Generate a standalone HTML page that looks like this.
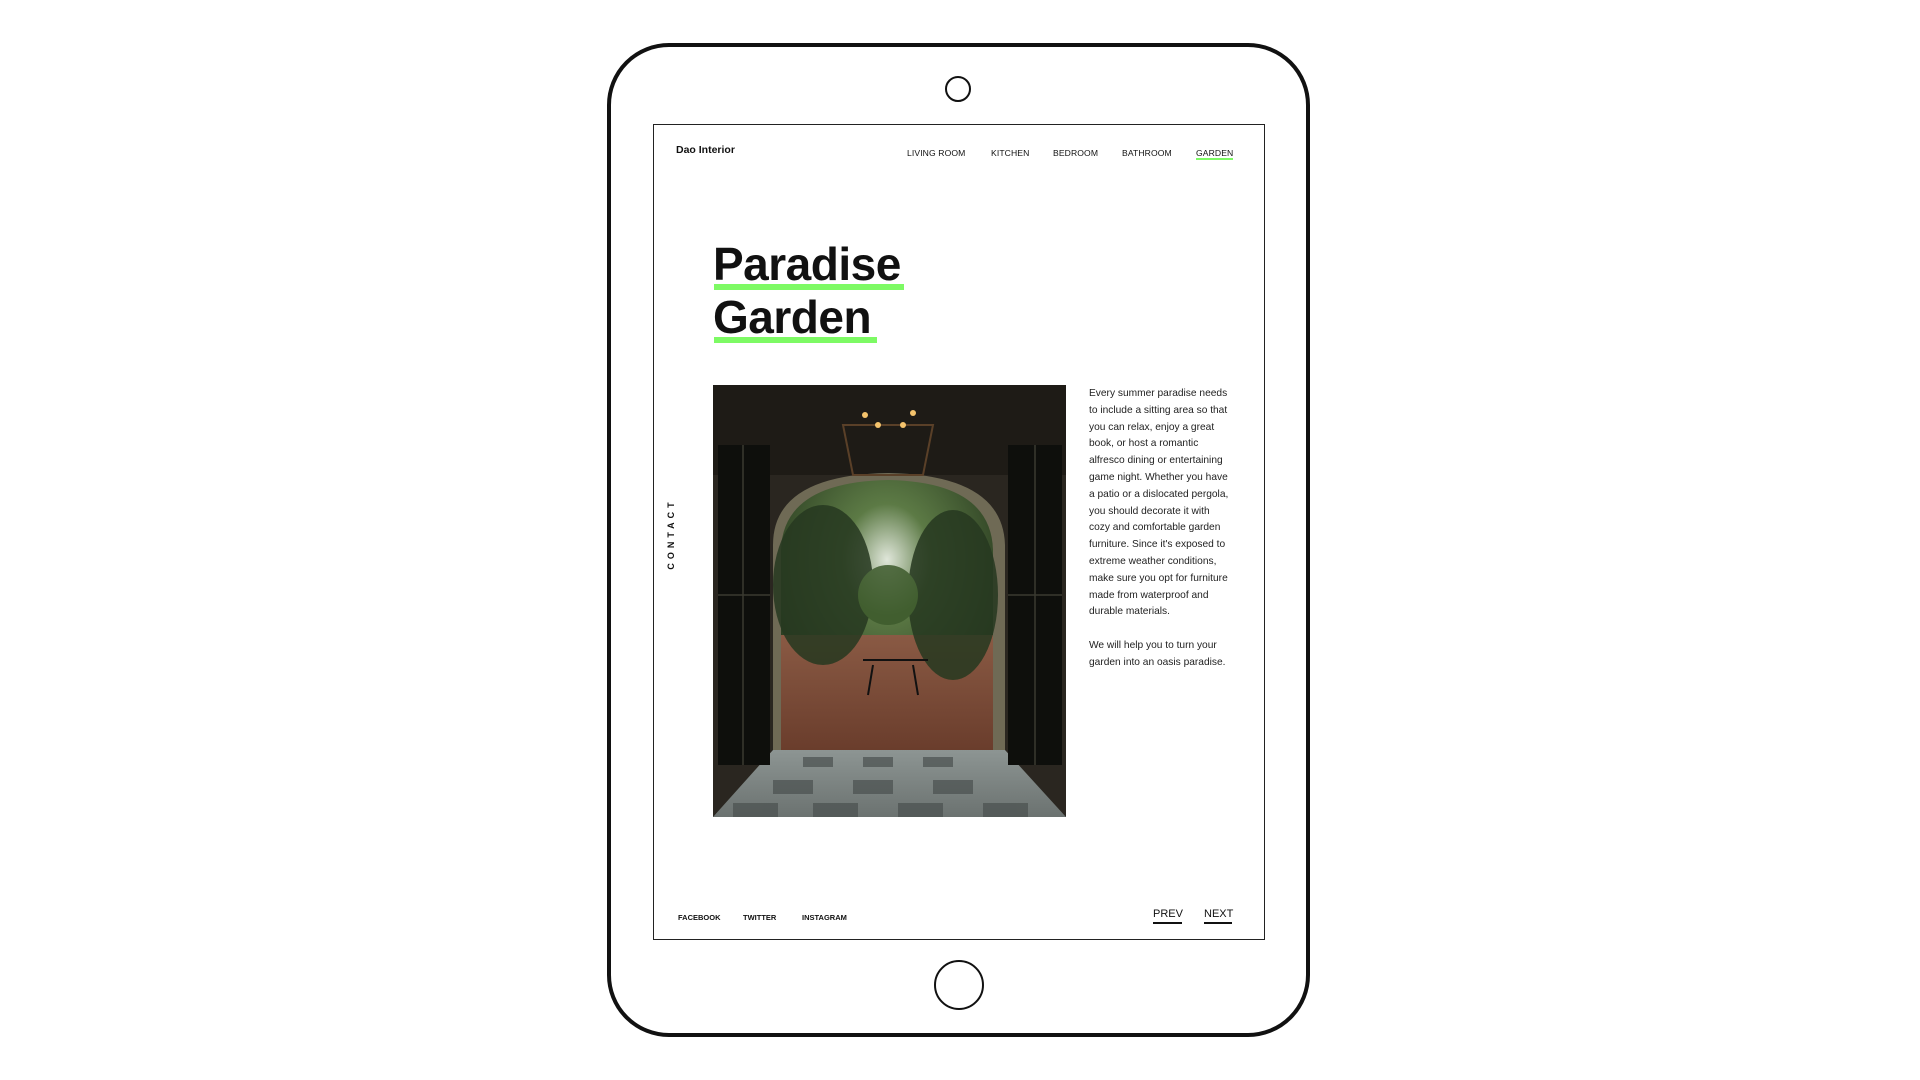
<!DOCTYPE html>
<html><head><meta charset="utf-8"><style>
*{margin:0;padding:0;box-sizing:border-box}
body{width:1920px;height:1080px;background:#fff;position:relative;overflow:hidden;font-family:"Liberation Sans",sans-serif;color:#111}
.abs{position:absolute}
.pad{left:607px;top:43px;width:703px;height:994px;border:4px solid #111;border-radius:62px}
.cam{left:945px;top:76px;width:26px;height:26px;border:2px solid #111;border-radius:50%}
.home{left:934px;top:960px;width:50px;height:50px;border:2px solid #111;border-radius:50%}
.screen{left:653px;top:124px;width:612px;height:816px;border:1.5px solid #222}
.nav{font-size:8.6px;top:148px;letter-spacing:.1px}
.title{left:713px;font-size:46px;font-weight:bold;letter-spacing:-.5px;line-height:1}
.ul{background:#7dfa64;height:6px;left:714px}
.txt{left:1089px;top:386px;width:142px;font-size:10.2px;line-height:16.8px;color:#222}
.foot{font-size:7.5px;font-weight:bold;top:913px}
.pn{font-size:11px;top:908px}
</style></head><body>
<div class="abs pad"></div>
<div class="abs cam"></div>
<div class="abs home"></div>
<div class="abs screen"></div>
<div class="abs" style="left:676px;top:144px;font-size:10.5px;font-weight:bold">Dao Interior</div>
<div class="abs nav" style="left:907px">LIVING ROOM</div>
<div class="abs nav" style="left:991px">KITCHEN</div>
<div class="abs nav" style="left:1053px">BEDROOM</div>
<div class="abs nav" style="left:1122px">BATHROOM</div>
<div class="abs nav" style="left:1196px">GARDEN</div>
<div class="abs" style="left:1196px;top:158px;width:37px;height:2px;background:#7dfa64"></div>
<div class="abs title" style="top:241px">Paradise</div>
<div class="abs ul" style="top:284px;width:190px"></div>
<div class="abs title" style="top:294px">Garden</div>
<div class="abs ul" style="top:337px;width:163px"></div>
<svg class="abs" style="left:713px;top:385px" width="353" height="432" viewBox="0 0 353 432">
<defs>
<linearGradient id="fl" x1="0" y1="0" x2="0" y2="1"><stop offset="0" stop-color="#8a5a44"/><stop offset="1" stop-color="#6a3d2c"/></linearGradient>
<linearGradient id="tl" x1="0" y1="0" x2="0" y2="1"><stop offset="0" stop-color="#8d9593"/><stop offset="1" stop-color="#6b7270"/></linearGradient>
<radialGradient id="gr" cx=".5" cy=".3" r=".7"><stop offset="0" stop-color="#dfe6d9"/><stop offset=".3" stop-color="#5c7a45"/><stop offset="1" stop-color="#1d2c17"/></radialGradient>
</defs>
<rect width="353" height="432" fill="#2a2620"/>
<rect x="0" y="0" width="353" height="90" fill="#1e1b16"/>
<path d="M60 420 V160 Q60 90 175 88 Q290 90 292 160 V420 Z" fill="#6f6a55"/>
<path d="M68 360 V165 Q70 97 175 95 Q278 97 280 165 V360 Z" fill="url(#gr)"/>
<rect x="68" y="250" width="212" height="115" fill="url(#fl)"/>
<g fill="#263820" opacity=".85"><ellipse cx="110" cy="200" rx="50" ry="80"/><ellipse cx="240" cy="210" rx="45" ry="85"/><ellipse cx="175" cy="210" rx="30" ry="30" fill="#3d5a2c"/></g>
<g stroke="#111" stroke-width="2" fill="none"><path d="M160 280 L155 310 M200 280 L205 310 M150 275 H215"/></g>
<path d="M0 432 L60 365 H292 L353 432 Z" fill="url(#tl)"/>
<g fill="#4a504f" opacity=".7"><rect x="90" y="372" width="30" height="10"/><rect x="150" y="372" width="30" height="10"/><rect x="210" y="372" width="30" height="10"/><rect x="60" y="395" width="40" height="14"/><rect x="140" y="395" width="40" height="14"/><rect x="220" y="395" width="40" height="14"/><rect x="20" y="418" width="45" height="14"/><rect x="100" y="418" width="45" height="14"/><rect x="185" y="418" width="45" height="14"/><rect x="270" y="418" width="45" height="14"/></g>
<rect x="5" y="60" width="52" height="320" fill="#0e0f0c"/>
<rect x="295" y="60" width="54" height="320" fill="#0e0f0c"/>
<g stroke="#3a3a30" stroke-width="1.5"><path d="M5 210 H57 M295 210 H349 M30 60 V380 M322 60 V380"/></g>
<path d="M130 40 H220 L210 90 H140 Z" fill="none" stroke="#5a4028" stroke-width="2"/>
<g fill="#f4c36c"><circle cx="152" cy="30" r="3"/><circle cx="165" cy="40" r="3"/><circle cx="190" cy="40" r="3"/><circle cx="200" cy="28" r="3"/></g>
</svg>
<div class="abs txt">Every summer paradise needs to include a sitting area so that you can relax, enjoy a great book, or host a romantic alfresco dining or entertaining game night. Whether you have a patio or a dislocated pergola, you should decorate it with cozy and comfortable garden furniture. Since it's exposed to extreme weather conditions, make sure you opt for furniture made from waterproof and durable materials.<br><br>We will help you to turn your garden into an oasis paradise.</div>
<div class="abs" style="left:671px;top:534px;transform:translate(-50%,-50%) rotate(-90deg);font-size:9px;font-weight:bold;letter-spacing:4px;white-space:nowrap">CONTACT</div>
<div class="abs foot" style="left:678px">FACEBOOK</div>
<div class="abs foot" style="left:743px">TWITTER</div>
<div class="abs foot" style="left:802px">INSTAGRAM</div>
<div class="abs pn" style="left:1153px">PREV</div>
<div class="abs" style="left:1153px;top:922px;width:29px;height:2px;background:#111"></div>
<div class="abs pn" style="left:1204px">NEXT</div>
<div class="abs" style="left:1204px;top:922px;width:28px;height:2px;background:#111"></div>
</body></html>
